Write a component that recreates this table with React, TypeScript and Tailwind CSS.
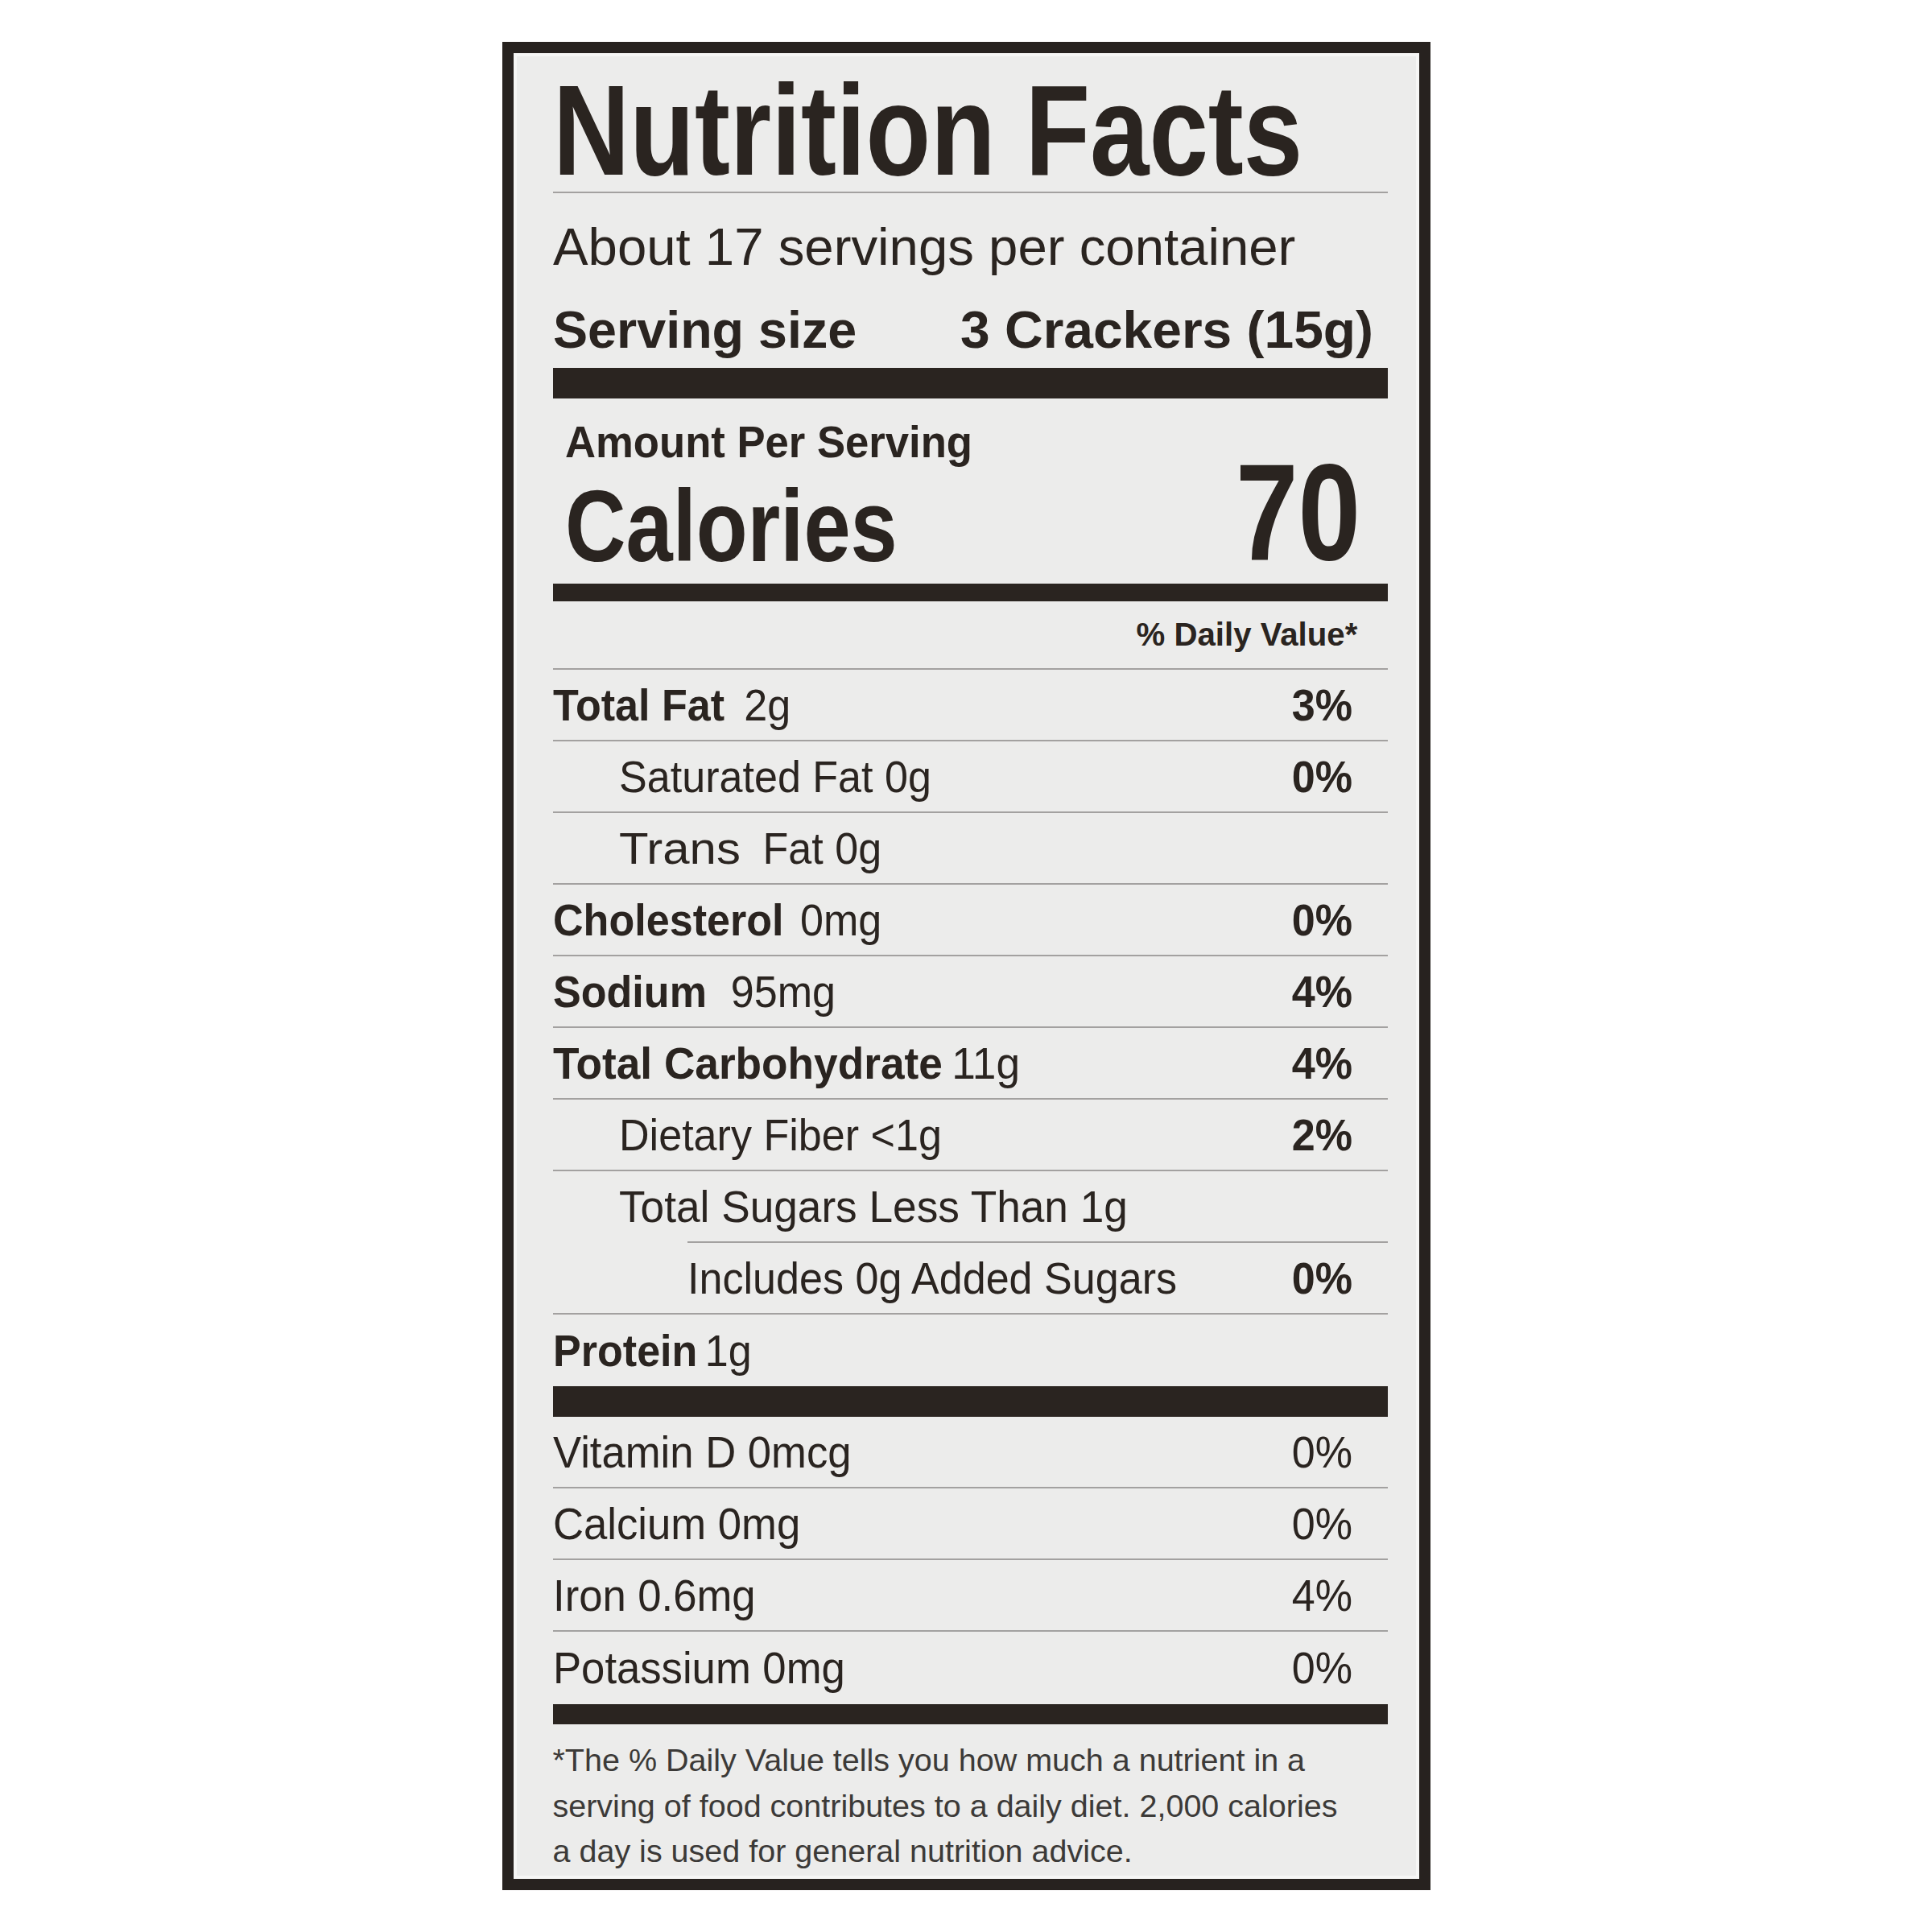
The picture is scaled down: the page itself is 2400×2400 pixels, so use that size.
import type { ReactNode } from "react"

type Nutrient = {
  name: ReactNode
  key: string
  amt?: string
  gap?: string
  bold?: boolean
  indent?: 0 | 1 | 2
  dv?: string
  sc?: string
}

const indentCls = ["", "pl-[82px]", "pl-[167px]"]

const nutrients: Nutrient[] = [
  { key: "fat", name: "Total Fat", amt: "2g", gap: "ml-[26px]", bold: true, dv: "3%" },
  { key: "sat", name: "Saturated Fat 0g", indent: 1, dv: "0%" },
  {
    key: "trans",
    // "Trans" is set a little wider than the rest on the label
    name: (
      <span className="inline-block w-[165px]">
        <span className="inline-block origin-left scale-x-[1.15]">Trans</span>
      </span>
    ),
    amt: "Fat 0g",
    gap: "ml-[27px]",
    indent: 1,
  },
  { key: "chol", name: "Cholesterol", amt: "0mg", gap: "ml-[22px]", bold: true, dv: "0%" },
  { key: "sod", name: "Sodium", amt: "95mg", gap: "ml-[32px]", bold: true, dv: "4%" },
  { key: "carb", name: "Total Carbohydrate", amt: "11g", gap: "ml-[12px]", bold: true, dv: "4%", sc: "scale-x-[0.95]" },
  { key: "fib", name: "Dietary Fiber <1g", indent: 1, dv: "2%" },
  { key: "sug", name: "Total Sugars Less Than 1g", indent: 1, sc: "scale-x-[0.95]" },
  { key: "add", name: "Includes 0g Added Sugars", indent: 2, dv: "0%" },
]

const vitamins = [
  { name: "Vitamin D 0mcg", dv: "0%", h: "h-[87px] leading-[87px]" },
  { name: "Calcium 0mg", dv: "0%", h: "h-[87px] leading-[87px]" },
  { name: "Iron 0.6mg", dv: "4%", h: "h-[87px] leading-[87px]" },
  { name: "Potassium 0mg", dv: "0%", h: "h-[90px] leading-[90px]" },
]

function Rule({ inset = false }: { inset?: boolean }) {
  return <div className={inset ? "h-[2px] ml-[167px] bg-[#a3a1a0]" : "h-[2px] bg-[#a3a1a0]"} />
}

function Bar({ h }: { h: string }) {
  return <div className={"bg-[#2a2420] " + h} />
}

function Row({ left, dv, dvBold = true, h = "h-[87px] leading-[87px]" }: { left: ReactNode; dv?: string; dvBold?: boolean; h?: string }) {
  return (
    <div className={"flex items-start justify-between pr-[44px] text-[56px] " + h}>
      {left}
      {dv && (
        <span className={"whitespace-nowrap origin-right scale-x-[0.93] " + (dvBold ? "font-bold" : "")}>{dv}</span>
      )}
    </div>
  )
}

export default function App() {
  return (
    <div className="w-[2400px] h-[2400px] bg-white flex items-center justify-center font-['Liberation_Sans',Arial,sans-serif] text-[#2a2420]">
      <div className="w-[1153px] h-[2296px] border-[14px] border-[#27221f] bg-[#ececeb] shadow-[inset_0_0_0_4px_#f6f6f5] flex flex-col pl-[49px] pr-[39px]">
        {/* title */}
        <div className="h-[172px] pt-[20px] flex items-start">
          <h1 className="text-[159px] leading-[152px] font-bold whitespace-nowrap origin-left scale-x-[0.83]">Nutrition Facts</h1>
        </div>
        <Rule />
        <div className="h-[133px] flex items-start">
          <span className="text-[65px] leading-[133px] whitespace-nowrap origin-left scale-x-[1.005]">About 17 servings per container</span>
        </div>
        <div className="h-[84px] flex items-start justify-between pr-[17px] text-[64px] leading-[74px] font-bold">
          <span className="whitespace-nowrap origin-left scale-x-[1.01]">Serving size</span>
          <span className="whitespace-nowrap origin-right scale-x-[1.03]">3 Crackers (15g)</span>
        </div>
        <Bar h="h-[38px]" />

        {/* calories */}
        <div className="h-[230px] pt-[24px] flex flex-col">
          <div className="h-[60px] flex items-start pl-[15px]">
            <span className="text-[56px] leading-[60px] font-bold whitespace-nowrap origin-left scale-x-[0.94]">Amount Per Serving</span>
          </div>
          <div className="h-[146px] flex items-start justify-between pl-[15px] pr-[33px] font-bold">
            <span className="text-[126px] leading-[149px] whitespace-nowrap origin-left scale-x-[0.83]">Calories</span>
            <span className="text-[170px] leading-[114px] whitespace-nowrap origin-right scale-x-[0.82]">70</span>
          </div>
        </div>
        <Bar h="h-[22px]" />
        <div className="h-[83px] flex items-start justify-end pr-[37px]">
          <span className="text-[41px] leading-[83px] font-bold whitespace-nowrap origin-right scale-x-[0.98]">% Daily Value*</span>
        </div>

        {/* nutrients */}
        {nutrients.map((n) => (
          <div key={n.key}>
            <Rule inset={n.indent === 2} />
            <Row
              dv={n.dv}
              left={
                <div className={indentCls[n.indent ?? 0]}>
                  <span className={"inline-block whitespace-nowrap origin-left " + (n.sc ?? "scale-x-[0.93]")}>
                    <span className={n.bold ? "font-bold" : ""}>{n.name}</span>
                    {n.amt && <span className={"inline-block " + n.gap}>{n.amt}</span>}
                  </span>
                </div>
              }
            />
          </div>
        ))}
        <Rule />
        <Row
          h="h-[89px] leading-[89px]"
          left={
            <span className="inline-block whitespace-nowrap origin-left scale-x-[0.93]">
              <span className="font-bold">Protein</span>
              <span className="inline-block ml-[10px]">1g</span>
            </span>
          }
        />
        <Bar h="h-[38px]" />

        {/* vitamins & minerals */}
        {vitamins.map((v, i) => (
          <div key={v.name}>
            {i > 0 && <Rule />}
            <Row
              h={v.h}
              dv={v.dv}
              dvBold={false}
              left={<span className="inline-block whitespace-nowrap origin-left scale-x-[0.94]">{v.name}</span>}
            />
          </div>
        ))}
        <Bar h="h-[25px]" />

        {/* footnote */}
        <div className="pt-[16px] flex flex-col items-start text-[39.5px] leading-[56.5px] text-[#3c3a38]">
          <span className="whitespace-nowrap">*The % Daily Value tells you how much a nutrient in a</span>
          <span className="whitespace-nowrap">serving of food contributes to a daily diet. 2,000 calories</span>
          <span className="whitespace-nowrap">a day is used for general nutrition advice.</span>
        </div>
      </div>
    </div>
  )
}
